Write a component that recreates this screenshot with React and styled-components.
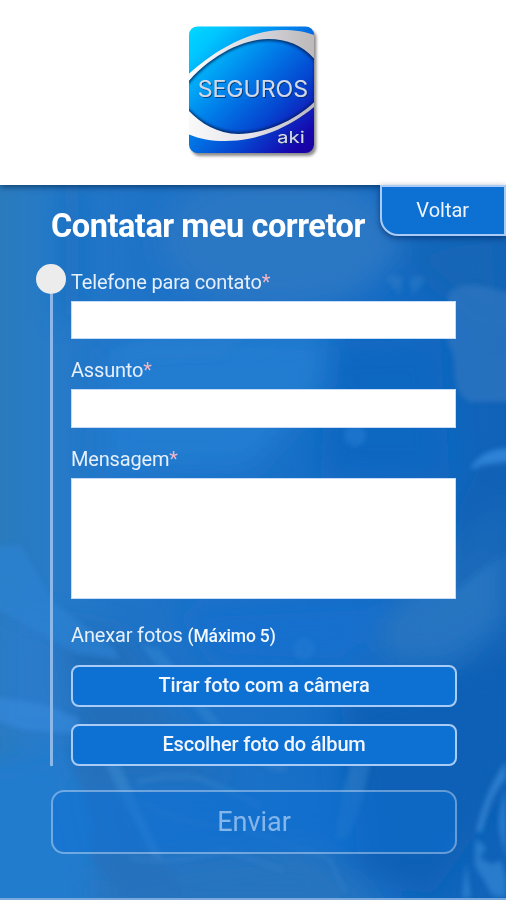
import React, { useState } from 'react';
import styled, { createGlobalStyle } from 'styled-components';

const App = () => {
  const [phone, setPhone] = useState('');
  const [subject, setSubject] = useState('');
  const [message, setMessage] = useState('');

  const canSend = phone !== '' && subject !== '' && message !== '';

  return (
    <Screen>
      <GlobalStyle />
      <Header>
        <Logo />
      </Header>
      <Main>
        <Backdrop />
        <TitleBar>
          <Title>Contatar meu corretor</Title>
          <BackButton type="button">Voltar</BackButton>
        </TitleBar>
        <Form onSubmit={(e) => e.preventDefault()}>
          <Steps>
            <Rail>
              <Dot />
              <Line />
            </Rail>
            <Fields>
              <Label htmlFor="phone">
                Telefone para contato<Required>*</Required>
              </Label>
              <Input id="phone" type="tel" value={phone} onChange={(e) => setPhone(e.target.value)} />
              <Label htmlFor="subject">
                Assunto<Required>*</Required>
              </Label>
              <Input id="subject" value={subject} onChange={(e) => setSubject(e.target.value)} />
              <Label htmlFor="message">
                Mensagem<Required>*</Required>
              </Label>
              <TextArea id="message" value={message} onChange={(e) => setMessage(e.target.value)} />
              <PhotosLabel>
                Anexar fotos <small>(Máximo 5)</small>
              </PhotosLabel>
              <Photos>
                <PhotoButton type="button">Tirar foto com a câmera</PhotoButton>
                <PhotoButton type="button">Escolher foto do álbum</PhotoButton>
              </Photos>
            </Fields>
          </Steps>
          <SendButton type="submit" disabled={!canSend}>Enviar</SendButton>
        </Form>
      </Main>
    </Screen>
  );
};

const Logo = () => (
  <LogoSvg viewBox="0 0 438 450" role="img" aria-label="Seguros Aki">
    <defs>
      <linearGradient id="logoBg" x1="0" y1="0" x2="1" y2="1">
        <stop offset="0" stopColor="#00d8ff" />
        <stop offset="0.14" stopColor="#00c5ff" />
        <stop offset="0.42" stopColor="#0080ea" />
        <stop offset="0.68" stopColor="#0544cf" />
        <stop offset="0.9" stopColor="#1606ad" />
        <stop offset="1" stopColor="#1b009d" />
      </linearGradient>
      <linearGradient id="topBand" x1="0" y1="0" x2="1" y2="0">
        <stop offset="0" stopColor="#ffffff" />
        <stop offset="0.6" stopColor="#d2d2d8" />
        <stop offset="1" stopColor="#bdb8b8" />
      </linearGradient>
      <linearGradient id="bottomBand" x1="0" y1="0" x2="1" y2="0">
        <stop offset="0" stopColor="#fafafa" />
        <stop offset="0.5" stopColor="#e4e4ea" />
        <stop offset="1" stopColor="#b9b5c0" />
      </linearGradient>
      <clipPath id="logoClip">
        <rect x="27" y="31" width="375" height="380" rx="26" />
      </clipPath>
      <filter id="softShadow" x="-20%" y="-20%" width="140%" height="140%">
        <feGaussianBlur stdDeviation="5" />
      </filter>
      <filter id="textShadow" x="-10%" y="-20%" width="120%" height="150%">
        <feDropShadow dx="3" dy="3" stdDeviation="2" floodColor="#06265e" floodOpacity="0.7" />
      </filter>
    </defs>
    <rect x="34" y="40" width="375" height="380" rx="26" fill="#000" opacity="0.45" filter="url(#softShadow)" />
    <g clipPath="url(#logoClip)">
      <rect x="27" y="31" width="375" height="380" fill="url(#logoBg)" />
      <path
        d="M20 202 C92 118 186 70 264 69 C326 69 370 90 408 134 L408 255 C350 312 258 354 175 354 C108 352 56 318 20 280"
        fill="none"
        stroke="#001f55"
        strokeWidth="9"
        filter="url(#softShadow)"
      />
      <path
        d="M20 180 C100 104 210 42 305 42 C350 42 386 49 408 60 L408 134 C370 90 326 69 264 69 C186 70 92 118 20 202 Z"
        fill="url(#topBand)"
      />
      <path
        d="M20 277 C56 318 108 352 175 354 C258 354 350 312 408 253 L408 268 C330 335 235 375 135 375 C91 375 54 368 20 352 Z"
        fill="url(#bottomBand)"
      />
    </g>
    <g fill="#d3d9e7" filter="url(#textShadow)">
      <text x="53" y="242" fontSize="68" textLength="331" lengthAdjust="spacingAndGlyphs">SEGUROS</text>
      <text x="291" y="382" fontSize="48" textLength="83" lengthAdjust="spacingAndGlyphs">aki</text>
    </g>
  </LogoSvg>
);

// hands and a face, washed out behind the form
const Backdrop = () => (
  <BackdropSvg viewBox="0 185 506 715" preserveAspectRatio="none" aria-hidden="true">
    <defs>
      <linearGradient id="base" x1="0" y1="0" x2="1" y2="0">
        <stop offset="0" stopColor="#2a7bbd" />
        <stop offset="0.1" stopColor="#277bc8" />
        <stop offset="0.25" stopColor="#2074c8" />
        <stop offset="0.55" stopColor="#1970c7" />
        <stop offset="0.78" stopColor="#136ac3" />
        <stop offset="1" stopColor="#1062b7" />
      </linearGradient>
      <filter id="haze" x="-40%" y="-40%" width="180%" height="180%">
        <feGaussianBlur stdDeviation="14" />
      </filter>
      <filter id="edge" x="-20%" y="-20%" width="140%" height="140%">
        <feGaussianBlur stdDeviation="2.5" />
      </filter>
    </defs>
    <rect y="185" width="506" height="715" fill="url(#base)" />
    <g filter="url(#haze)">
      <ellipse cx="280" cy="240" rx="120" ry="70" fill="#2c77c4" />
      <rect x="62" y="185" width="20" height="130" fill="#1968bd" opacity="0.6" />
      <path d="M105 352 C140 326 210 330 330 336 L325 385 L250 470 L100 470Z" fill="#207dd0" />
      <path d="M330 342 L440 340 L450 480 L320 480Z" fill="#0f68c1" />
      <path d="M395 250 L500 230 L506 330 L480 315Z" fill="#1766b6" />
      <path d="M0 610 L55 630 L95 690 L70 740 L0 735Z" fill="#2c7bcb" />
      <path d="M60 625 L130 640 L170 720 L230 780 L80 780Z" fill="#246eba" />
      <path d="M-30 765 L70 745 L110 930 L-30 930Z" fill="#207bce" />
      <path d="M180 610 L390 600 L350 670 L220 665Z" fill="#1270cd" />
      <path d="M380 620 L506 500 L506 625 L450 665 L380 662Z" fill="#2874c1" />
      <path d="M340 700 L530 650 L530 760 L430 900 L360 870Z" fill="#0d61b5" />
      <path d="M90 870 L310 845 L400 920 L90 920Z" fill="#2674c0" />
    </g>
    <g filter="url(#edge)">
      <path d="M448 295 C460 280 480 284 516 295 L516 403 L470 403 C445 388 462 360 448 345Z" fill="#2d76c0" opacity="0.75" />
      <path d="M386 280 Q388 272 403 278 L400 295Z M409 280 Q419 272 425 281 L413 295Z" fill="#2b7bc8" opacity="0.6" />
      <path d="M110 352 Q142 335 178 340 L245 338 L220 360 L110 363Z" fill="#277fd0" opacity="0.5" />
      <circle cx="355" cy="436" r="11" fill="#2780d4" opacity="0.5" />
      <circle cx="304" cy="650" r="11" fill="#2780d4" opacity="0.4" />
      <path d="M471 468 Q483 448 510 449 L510 462 Q487 464 471 470Z" fill="#2d82d5" />
      <path d="M460 505 L480 465 L510 464 L510 550 L456 590Z" fill="#1262b5" opacity="0.6" />
      <path d="M-5 548 L20 546 L54 604 L115 650 L119 660 L76 655 L20 623 L-5 610Z" fill="#2e83d5" opacity="0.6" />
      <path d="M140 646 L160 650 L225 730 L207 724Z" fill="#408ed7" opacity="0.35" />
      <path d="M-5 698 L45 706 L80 721 L72 735 L22 731 L-5 722Z" fill="#358bdc" opacity="0.6" />
      <path d="M65 748 L102 762 L140 840 L170 870 L185 900 L126 900 L91 860 L94 820Z" fill="#2870ba" opacity="0.6" />
      <path d="M103 762 L119 764 L163 862 L152 857Z" fill="#4790d3" opacity="0.4" />
      <path d="M137 784 Q170 775 196 779 Q230 792 260 808" fill="none" stroke="#3a86ce" strokeWidth="5" opacity="0.4" />
      <path d="M142 803 Q174 827 242 830 L330 861 L345 895" fill="none" stroke="#3b88cf" strokeWidth="3" opacity="0.45" />
      <path d="M130 859 Q171 868 226 852 L283 872" fill="none" stroke="#3b88cf" strokeWidth="3" opacity="0.5" />
      <path d="M255 762 L285 763 L287 773 L273 773Z M351 765 L370 765 L362 803 L348 840 L336 840 L342 795Z" fill="#3080ca" opacity="0.5" />
      <path d="M506 763 Q485 793 476 833 L482 835 Q490 796 506 780Z" fill="#3384d3" opacity="0.85" />
      <path d="M506 790 Q495 818 501 840 L506 862Z M475 840 L486 849 L480 860 L492 866 L501 862 L506 879 L506 900 L492 897 L485 884 L475 868Z M466 865 L471 900 L462 900Z" fill="#3384d3" opacity="0.75" />
    </g>
  </BackdropSvg>
);

const GlobalStyle = createGlobalStyle`
  * {
    box-sizing: border-box;
  }
  body {
    margin: 0;
    background: #fff;
    font-family: Roboto, "Liberation Sans", sans-serif;
  }
  button, input, textarea {
    font-family: inherit;
  }
`;

const Screen = styled.div`
  display: flex;
  flex-direction: column;
  width: 100%;
  height: 900px;
  overflow: hidden;
`;

const Header = styled.header`
  position: relative;
  z-index: 1;
  display: flex;
  justify-content: center;
  flex: 0 0 185px;
  padding-top: 16px;
  background: #fff;
  box-shadow: 0 1px 7px rgba(0, 24, 56, 0.75);
`;

const LogoSvg = styled.svg`
  width: 146px;
  height: 150px;
  font-family: Inter, "Liberation Sans", sans-serif;
  font-weight: 400;
`;

const Main = styled.main`
  position: relative;
  flex: 1;
  border-bottom: 2px solid #79a9dc;
`;

const BackdropSvg = styled.svg`
  position: absolute;
  inset: 0;
  width: 100%;
  height: 100%;
`;

const TitleBar = styled.div`
  position: relative;
  z-index: 2;
  display: flex;
  justify-content: space-between;
  align-items: flex-start;
  height: 79px;
  padding-left: 51px;
`;

const Title = styled.h1`
  margin: 22px 0 0;
  color: #fff;
  font-size: 32.5px;
  font-weight: 700;
  letter-spacing: -0.47px;
  line-height: 38px;
  white-space: nowrap;
`;

const BackButton = styled.button`
  width: 126.5px;
  height: 51px;
  padding: 0 0 2px;
  color: #eef4ff;
  background: #0d70d3;
  border: 2px solid #a9cbf5;
  border-radius: 0 0 0 18px;
  box-shadow: 0 2px 6px rgba(0, 25, 75, 0.55);
  font-size: 20px;
`;

const Form = styled.form`
  position: relative;
  padding: 0 49px 0 36px;
`;

const Steps = styled.div`
  display: grid;
  grid-template-columns: 30px 1fr;
  column-gap: 5px;
`;

const Rail = styled.div`
  display: flex;
  flex-direction: column;
  align-items: center;
`;

const Dot = styled.span`
  width: 30px;
  height: 30px;
  border-radius: 50%;
  background: #ececec;
`;

const Line = styled.span`
  flex: 1;
  width: 3px;
  margin-left: 1px;
  background: #8bb8e9;
`;

const Fields = styled.div`
  display: flex;
  flex-direction: column;
  padding-top: 5.5px;
`;

const Label = styled.label`
  height: 24px;
  margin-bottom: 7px;
  color: #e6effc;
  font-size: 20px;
  line-height: 24px;
  letter-spacing: -0.18px;
  white-space: nowrap;
`;

const Required = styled.span`
  color: #f5b5c5;
`;

const Input = styled.input`
  width: calc(100% - 1px);
  height: 38.5px;
  margin-bottom: 19px;
  padding: 0 10px;
  border: 1px solid #c6dcf6;
  border-radius: 0;
  background: #fff;
  font-size: 18px;
  outline: none;
`;

const TextArea = styled.textarea`
  width: calc(100% - 1px);
  height: 121.5px;
  margin-bottom: 24px;
  padding: 10px;
  border: 1px solid #c6dcf6;
  border-radius: 0;
  background: #fff;
  font-size: 18px;
  resize: none;
  outline: none;
`;

const PhotosLabel = styled.div`
  height: 24px;
  margin-bottom: 18px;
  color: #e6effc;
  font-size: 20px;
  line-height: 24px;
  letter-spacing: -0.16px;

  small {
    color: #f3f8ff;
    font-size: 17.5px;
    font-weight: 500;
  }
`;

const Photos = styled.div`
  display: flex;
  flex-direction: column;
  gap: 17.5px;
`;

const PhotoButton = styled.button`
  height: 41.5px;
  padding: 0 0 1px;
  color: #f1f6ff;
  background: #0d70d3;
  border: 2px solid #a9ccf6;
  border-radius: 8px;
  font-size: 20px;
  font-weight: 500;
  letter-spacing: -0.16px;
`;

const SendButton = styled.button`
  display: block;
  width: calc(100% - 15px);
  height: 64px;
  margin: 24.5px 0 0 15px;
  padding: 0 0 1px;
  color: #f0f6ff;
  background: #0d70d3;
  border: 2px solid #d3e5fb;
  border-radius: 13px;
  font-size: 27px;

  &:disabled {
    color: rgba(220, 235, 255, 0.57);
    background: rgba(13, 112, 211, 0.5);
    border-color: rgba(190, 216, 248, 0.5);
    background-clip: padding-box;
  }
`;

export default App;
